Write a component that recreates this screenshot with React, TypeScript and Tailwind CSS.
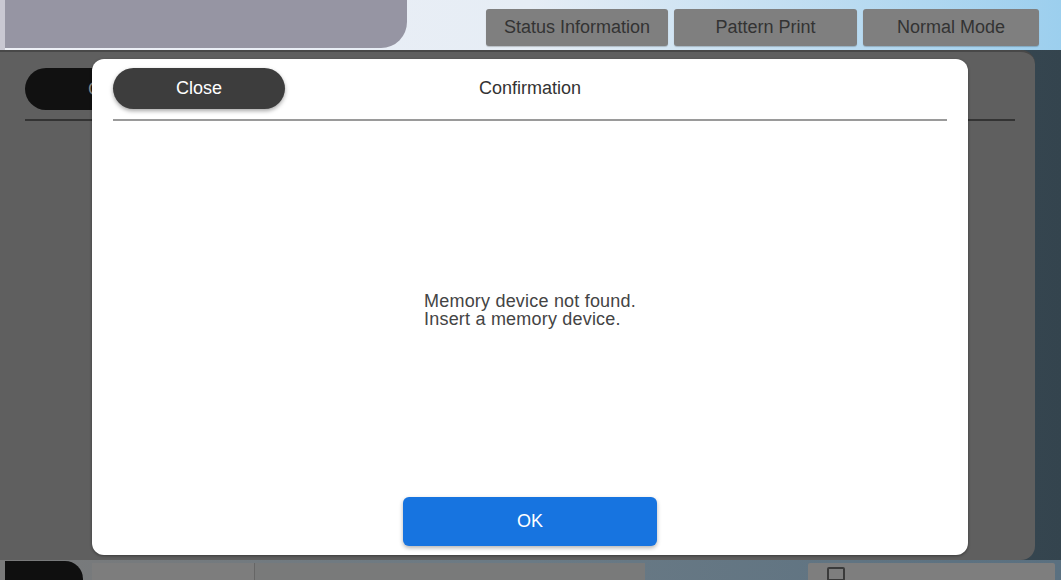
import React from "react";

export default function App() {
  const font = { fontFamily: '"Liberation Sans", Arial, sans-serif' };
  return (
    <div className="relative w-[1061px] h-[580px] overflow-hidden bg-[#3a4a55]" style={font}>
      {/* top bar */}
      <div className="flex h-[50px] bg-gradient-to-r from-[#eef0f6] via-[#e6edf5] to-[#9ccfee]">
        <div className="w-[5px] bg-[#c9c8d2]" />
        <div className="w-[402px] h-[48px] bg-[#9695a3] rounded-br-[26px]" />
        <div className="flex-1 flex items-start justify-end pt-[9px] pr-[22px] gap-[6px]">
          <div className="w-[182px] h-[37px] rounded-[3px] bg-[#7f7f7f] text-[#333] text-[18px] flex items-center justify-center shadow-[0_1px_1px_rgba(0,0,0,0.2)]">Status Information</div>
          <div className="w-[183px] h-[37px] rounded-[3px] bg-[#7f7f7f] text-[#333] text-[18px] flex items-center justify-center shadow-[0_1px_1px_rgba(0,0,0,0.2)]">Pattern Print</div>
          <div className="w-[176px] h-[37px] rounded-[3px] bg-[#7f7f7f] text-[#333] text-[18px] flex items-center justify-center shadow-[0_1px_1px_rgba(0,0,0,0.2)]">Normal Mode</div>
        </div>
      </div>
      {/* middle */}
      <div className="flex h-[510px] bg-gradient-to-r from-[#5e6f7b] to-[#34444e]">
        <div className="w-[1035px] h-[510px] bg-[#5f5f5f] rounded-tr-[14px] rounded-br-[14px] border-t-[2px] border-[#484848] pt-[16px] pl-[25px] pr-[20px]">
          <div className="w-[172px] h-[42px] rounded-full bg-[#111] text-[#8a8a8a] text-[18px] flex items-center justify-center">Close</div>
          <div className="mt-[9px] h-[2px] bg-[#333]" />
        </div>
      </div>
      {/* bottom */}
      <div className="flex h-[20px] items-end bg-gradient-to-r from-[#7a7a7a] via-[#6a7a85] to-[#5a7080]">
        <div className="w-[5px]" />
        <div className="w-[78px] h-[19px] bg-[#0f0f0f] rounded-tr-[18px]" />
        <div className="ml-[9px] w-[163px] h-[17px] bg-[#7d7d7d] border-r border-[#666]" />
        <div className="w-[390px] h-[17px] bg-[#797a7a]" />
        <div className="ml-[163px] w-[247px] h-[17px] bg-[#7e7e7e] rounded-t-[2px] pl-[19px] pt-[4px]">
          <div className="w-[18px] h-[14px] border-[2px] border-[#3a3a3a] rounded-[2px]" />
        </div>
      </div>

      {/* modal */}
      <div className="absolute left-[92px] top-[59px] w-[876px] h-[496px] bg-white rounded-[12px] shadow-[0_1px_3px_rgba(0,0,0,0.4)] flex flex-col px-[21px] pt-[9px]">
        <div className="relative flex items-center h-[41px]">
          <div className="w-[172px] h-[41px] rounded-full bg-[#3d3d3d] text-white text-[18px] flex items-center justify-center shadow-[0_2px_4px_rgba(0,0,0,0.35)]">Close</div>
          <div className="absolute left-0 right-0 text-center text-[18px] text-[#333] pointer-events-none">Confirmation</div>
        </div>
        <div className="mt-[10px] h-[2px] bg-[#9a9a9a]" />
        <div className="flex-1 flex items-center justify-center pt-[2px]">
          <div className="text-[18px] leading-[18px] text-[#444] tracking-[0.2px]">
            <div>Memory device not found.</div>
            <div>Insert a memory device.</div>
          </div>
        </div>
        <div className="flex justify-center pb-[9px]">
          <div className="w-[254px] h-[49px] rounded-[6px] bg-[#1774e0] text-white text-[18px] flex items-center justify-center shadow-[0_2px_4px_rgba(0,0,0,0.3)]">OK</div>
        </div>
      </div>
    </div>
  );
}
